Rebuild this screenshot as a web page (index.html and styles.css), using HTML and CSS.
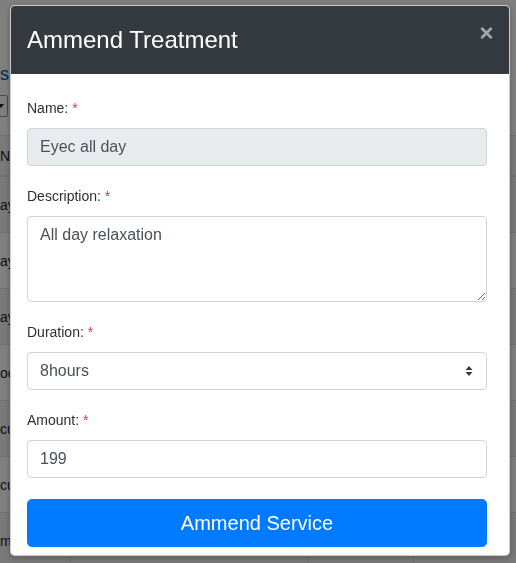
FILE: index.html
```html
<!DOCTYPE html>
<html lang="en">
<head>
<meta charset="utf-8">
<title>Ammend Treatment</title>
<link rel="stylesheet" href="styles.css">
</head>
<body>
<div class="page">
  <div class="crumb">s</div>
  <div class="page-select">
    <svg class="caret" width="6" height="4" viewBox="0 0 6 4"><path d="M0 0 L6 0 L3 4 Z" fill="#222"/></svg>
  </div>
  <table class="list">
    <thead>
      <tr><th class="c1">Na</th><th class="c2"></th><th class="c3"></th><th class="c4"></th></tr>
    </thead>
    <tbody>
      <tr><td class="c1">ay</td><td></td><td></td><td></td></tr>
      <tr><td class="c1">ay</td><td></td><td></td><td></td></tr>
      <tr><td class="c1">ay</td><td></td><td></td><td></td></tr>
      <tr><td class="c1">oc</td><td></td><td></td><td></td></tr>
      <tr><td class="c1">cu</td><td></td><td></td><td></td></tr>
      <tr><td class="c1">cu</td><td></td><td></td><td></td></tr>
      <tr><td class="c1">m</td><td></td><td></td><td></td></tr>
    </tbody>
  </table>
</div>

<div class="backdrop"></div>

<div class="modal">
  <div class="modal-header">
    <h4 class="modal-title">Ammend Treatment</h4>
    <span class="close" aria-label="Close">
      <svg width="13" height="12" viewBox="0 0 13 12"><path d="M2.2 1.8 L10.8 10.2 M10.8 1.8 L2.2 10.2" stroke="currentColor" stroke-width="2.8" stroke-linecap="round"/></svg>
    </span>
  </div>
  <div class="modal-body">
    <div class="group">
      <label class="label">Name: <span class="req">*</span></label>
      <input class="control disabled" type="text" value="Eyec all day" disabled>
    </div>
    <div class="group">
      <label class="label">Description: <span class="req">*</span></label>
      <textarea class="control area">All day relaxation</textarea>
    </div>
    <div class="group">
      <label class="label">Duration: <span class="req">*</span></label>
      <div class="control select">
        <span>8hours</span>
        <svg class="arrows" width="8" height="12" viewBox="0 0 8 12"><path d="M0.5 5 L4 1 L7.5 5 Z M0.5 7 L4 11 L7.5 7 Z" fill="#343a40"/></svg>
      </div>
    </div>
    <div class="group">
      <label class="label">Amount: <span class="req">*</span></label>
      <input class="control" type="text" value="199">
    </div>
    <button class="btn" type="button">Ammend Service</button>
  </div>
</div>
</body>
</html>
```

FILE: styles.css
```css
html, body {
  margin: 0;
  padding: 0;
}
body {
  width: 516px;
  height: 563px;
  overflow: hidden;
  background: #fff;
  font-family: "Liberation Sans", Arial, sans-serif;
  color: #212529;
}

/* background page */
.page {
  padding-top: 64px;
}
.crumb {
  font-size: 18px;
  line-height: 20px;
  color: #0056b3;
}
.page-select {
  margin-top: 11px;
  margin-left: -22px;
  width: 30px;
  height: 22px;
  box-sizing: border-box;
  border: 1px solid #999;
  border-radius: 2px;
  display: flex;
  align-items: center;
  justify-content: flex-end;
  padding-right: 3px;
}
.caret { display: block; }
.list {
  margin-top: 18px;
  border-collapse: collapse;
  width: 560px;
  font-size: 16px;
}
.list th, .list td {
  border-top: 1px solid #dee2e6;
  padding: 0;
  text-align: left;
  vertical-align: middle;
}
.list th {
  height: 39px;
  font-weight: 400;
  border-bottom: 2px solid #dee2e6;
  background: #f4f4f4;
}
.list td {
  height: 55px;
}
.list tbody tr:nth-child(odd) td {
  background: #f2f2f2;
}
.list .c1 { width: 70px; border-right: 1px solid #dee2e6; font-size: 14px; }
.list td:nth-child(2), .list .c2 { width: 236px; border-right: 1px solid #dee2e6; }
.list td:nth-child(3), .list .c3 { width: 105px; border-right: 1px solid #dee2e6; }

/* overlay */
.backdrop {
  position: fixed;
  inset: 0;
  background: rgba(0, 0, 0, 0.5);
}
.modal {
  position: fixed;
  top: 5px;
  left: 10px;
  width: 500px;
  box-sizing: border-box;
  background: #fff;
  border: 1px solid rgba(0, 0, 0, 0.2);
  border-radius: 4.8px;
  overflow: hidden;
  box-shadow: 0 2px 6px rgba(0, 0, 0, 0.25);
}
.modal-header {
  display: flex;
  justify-content: space-between;
  align-items: flex-start;
  background: #343a40;
  height: 68px;
  box-sizing: border-box;
  padding: 16px;
}
.modal-title {
  margin: 0;
  font-size: 24px;
  line-height: 36px;
  font-weight: 400;
  color: #fff;
}
.close {
  display: block;
  margin-top: 5px;
  width: 13px;
  height: 12px;
  color: #a2a5aa;
}
.close svg { display: block; }

.modal-body {
  padding: 24px 22px 8px 16px;
}
.group {
  margin-bottom: 20px;
}
.label {
  display: block;
  font-size: 14px;
  line-height: 21px;
  margin-bottom: 9px;
  color: #2b2f33;
}
.req {
  color: #dc3545;
}
.control {
  display: block;
  width: 100%;
  height: 38px;
  box-sizing: border-box;
  margin: 0;
  padding: 6px 12px;
  font-family: "Liberation Sans", Arial, sans-serif;
  font-size: 16px;
  line-height: 24px;
  color: #495057;
  background: #fff;
  border: 1px solid #ced4da;
  border-radius: 4px;
  outline: none;
}
.control.disabled {
  background: #e9ecef;
  color: #495057;
  -webkit-text-fill-color: #495057;
  opacity: 1;
}
.area {
  height: 86px;
  resize: vertical;
}
.select {
  display: flex;
  align-items: center;
  justify-content: space-between;
  padding-right: 13px;
}
.arrows { display: block; }
.btn {
  display: block;
  width: 100%;
  height: 48px;
  margin-top: 21px;
  box-sizing: border-box;
  background: #007bff;
  border: 1px solid #007bff;
  border-radius: 4.8px;
  color: #fff;
  font-family: "Liberation Sans", Arial, sans-serif;
  font-size: 20px;
  line-height: 30px;
  padding: 8px 16px;
}
```
